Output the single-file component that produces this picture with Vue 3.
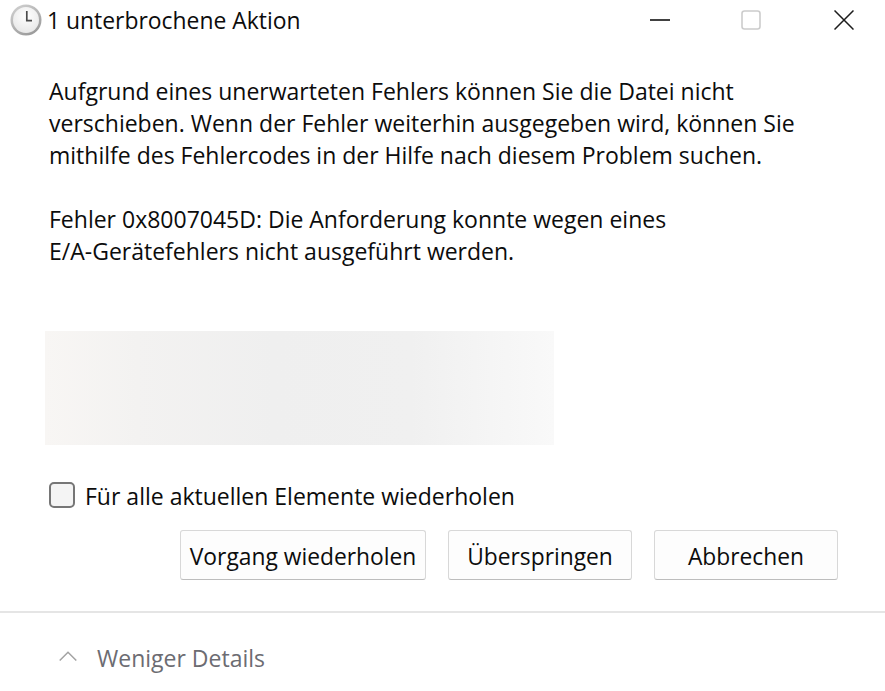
<template>
    <div class="dialog">
        <header class="titlebar">
            <svg class="clock" width="32" height="32" viewBox="0 0 32 32">
                <defs>
                    <linearGradient id="ring" x1="0" y1="0" x2="0.6" y2="1">
                        <stop offset="0" stop-color="#d4d4d4"/>
                        <stop offset="1" stop-color="#9c9c9c"/>
                    </linearGradient>
                    <radialGradient id="face" cx="0.5" cy="0.35" r="0.7">
                        <stop offset="0" stop-color="#ffffff"/>
                        <stop offset="1" stop-color="#e6e6e6"/>
                    </radialGradient>
                </defs>
                <circle cx="16" cy="16" r="15.5" fill="url(#ring)"/>
                <circle cx="16" cy="16" r="13" fill="url(#face)"/>
                <path d="M16.8 7V16.6H22" fill="none" stroke="#4d4d4d" stroke-width="1.7"/>
            </svg>
            <span class="title">1 unterbrochene Aktion</span>
            <div class="controls">
                <svg width="20" height="20" viewBox="0 0 20 20"><path d="M0 10H20" stroke="#111" stroke-width="1.6"/></svg>
                <svg width="20" height="20" viewBox="0 0 20 20"><rect x="1" y="1" width="18" height="18" rx="2.5" fill="none" stroke="#cccccc" stroke-width="1.6"/></svg>
                <svg width="20" height="20" viewBox="0 0 20 20"><path d="M0.5 0.5L19.5 19.5M19.5 0.5L0.5 19.5" stroke="#1c1c1c" stroke-width="1.5"/></svg>
            </div>
        </header>

        <main class="content">
            <p class="message">Aufgrund eines unerwarteten Fehlers können Sie die Datei nicht<br/>verschieben. Wenn der Fehler weiterhin ausgegeben wird, können Sie<br/>mithilfe des Fehlercodes in der Hilfe nach diesem Problem suchen.</p>
            <p class="message error">Fehler 0x8007045D: Die Anforderung konnte wegen eines<br/>E/A-Gerätefehlers nicht ausgeführt werden.</p>
            <div class="blurred"></div>
            <label class="repeat">
                <span class="checkbox"></span>
                <span class="repeat-text">Für alle aktuellen Elemente wiederholen</span>
            </label>
            <div class="buttons">
                <button class="btn retry">Vorgang wiederholen</button>
                <button class="btn skip">Überspringen</button>
                <button class="btn cancel">Abbrechen</button>
            </div>
        </main>

        <footer class="details">
            <svg class="chevron" width="18" height="10" viewBox="0 0 18 10"><path d="M0.7 9.5L9 1.2L17.3 9.5" fill="none" stroke="#a3a3a3" stroke-width="1.5"/></svg>
            <span>Weniger Details</span>
        </footer>
    </div>
</template>

<script setup>
</script>

<style>
    html, body {
        background: #ffffff;
    }
</style>

<style scoped>
    .dialog {
        width: 885px;
        height: 691px;
        display: flex;
        flex-direction: column;
        background: #ffffff;
        color: #0c0c0c;
        font-family: "Open Sans", "Noto Sans", sans-serif;
        font-size: 23px;
        overflow: hidden;
    }

    .titlebar {
        height: 40px;
        padding: 4px 31px 0 10px;
        display: flex;
        align-items: center;
        box-sizing: border-box;
        flex: none;
    }

    .clock {
        margin-right: 5px;
        margin-top: -4px;
    }

    .title {
        flex: 1;
        margin-top: -3px;
        font-size: 22.9px;
    }

    .controls {
        display: flex;
        gap: 71px;
        margin-top: -4px;
    }

    .controls svg:last-child {
        margin-left: 2px;
    }

    .content {
        flex: 1;
        padding: 35px 47px 0 49px;
        display: flex;
        flex-direction: column;
    }

    .message {
        margin: 0;
        line-height: 32px;
        white-space: nowrap;
    }

    .error {
        margin-top: 32px;
    }

    .blurred {
        width: 509px;
        height: 114px;
        margin: 64px 0 0 -4px;
        background: linear-gradient(90deg, #f8f6f4 0%, #f3f2f1 18%, #efefef 45%, #f0f0f0 72%, #f9f9f9 100%);
    }

    .repeat {
        margin-top: 37px;
        height: 26px;
        display: flex;
        align-items: center;
        gap: 10px;
    }

    .repeat-text {
        margin-top: 1px;
    }

    .checkbox {
        width: 22px;
        height: 22px;
        border: 2px solid #767676;
        border-radius: 5px;
        background: #f4f4f4;
    }

    .buttons {
        margin-top: 22px;
        display: flex;
        justify-content: flex-end;
        gap: 22px;
    }

    .btn {
        height: 50px;
        padding: 2px 0 0;
        background: #fdfdfd;
        border: 1px solid #d8d8d8;
        border-bottom-color: #bdbdbd;
        border-radius: 3px;
        color: inherit;
        font: inherit;
        font-size: 22.8px;
    }

    .retry {
        width: 246px;
    }

    .skip,
    .cancel {
        width: 184px;
    }

    .details {
        flex: none;
        height: 80px;
        border-top: 2px solid #e5e5e5;
        box-sizing: border-box;
        padding: 11px 0 0 59px;
        display: flex;
        align-items: center;
        gap: 20px;
        color: #6c6c72;
    }

    .chevron {
        margin-top: -4px;
    }
</style>
